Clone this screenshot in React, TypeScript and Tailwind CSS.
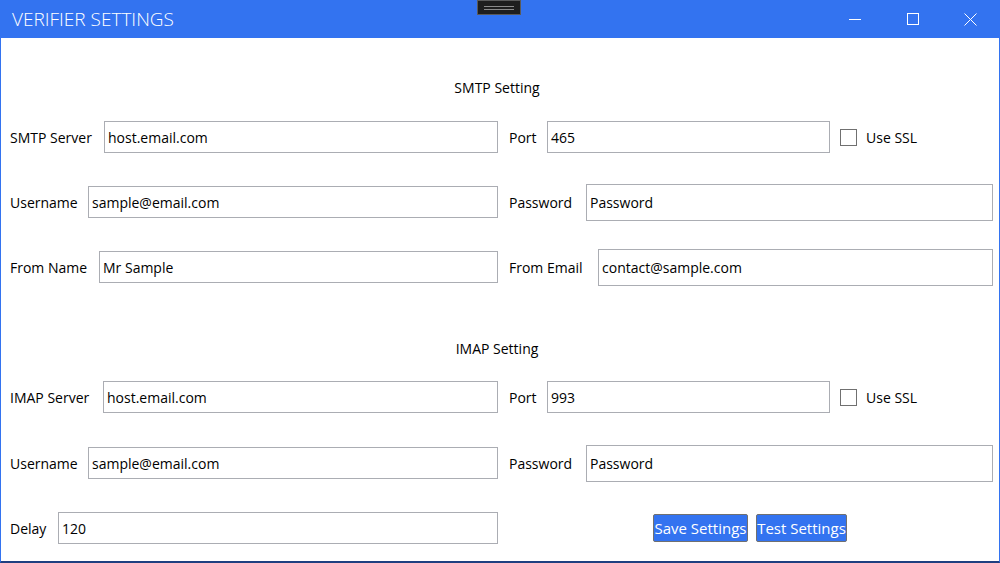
import React from "react";

const font = { fontFamily: '"Open Sans", "Noto Sans", sans-serif' };

function Field({ value, className }: { value: string; className: string }) {
  return (
    <div
      className={`flex items-center border border-[#abadb3] bg-white pl-[3px] text-[14px] text-black ${className}`}
    >
      {value}
    </div>
  );
}

function Label({ text, className }: { text: string; className: string }) {
  return <div className={`shrink-0 text-[14px] text-black ${className}`}>{text}</div>;
}

function SSL() {
  return (
    <div className="ml-[10px] flex items-center">
      <div className="h-[17px] w-[17px] border border-[#707070] bg-white" />
      <span className="ml-[9px] text-[14px] text-black">Use SSL</span>
    </div>
  );
}

export default function App() {
  return (
    <div
      className="flex h-[563px] w-[1000px] flex-col overflow-hidden bg-white"
      style={font}
    >
      {/* Title bar */}
      <div className="relative flex h-[38px] shrink-0 items-center bg-[#3373f0] pl-[12px] text-white">
        <span className="text-[19px] font-light">VERIFIER SETTINGS</span>
        <div className="absolute left-[477px] top-0 flex h-[15px] w-[44px] flex-col items-center justify-center gap-[2px] border border-[#5a5a5a] bg-[#1e1e1e]">
          <div className="h-[1px] w-[30px] bg-[#8a8a8a]" />
          <div className="h-[1px] w-[30px] bg-[#8a8a8a]" />
        </div>
        <div className="ml-auto flex h-full items-center">
          <div className="flex h-full w-[58px] items-center justify-center">
            <svg width="12" height="12" viewBox="0 0 12 12">
              <line x1="0" y1="6.5" x2="12" y2="6.5" stroke="white" strokeWidth="1" />
            </svg>
          </div>
          <div className="flex h-full w-[58px] items-center justify-center">
            <svg width="12" height="12" viewBox="0 0 12 12">
              <rect x="0.5" y="0.5" width="11" height="11" fill="none" stroke="white" strokeWidth="1" />
            </svg>
          </div>
          <div className="flex h-full w-[58px] items-center justify-center pr-[2px]">
            <svg width="13" height="13" viewBox="0 0 13 13">
              <line x1="0.5" y1="0.5" x2="12.5" y2="12.5" stroke="white" strokeWidth="1" />
              <line x1="12.5" y1="0.5" x2="0.5" y2="12.5" stroke="white" strokeWidth="1" />
            </svg>
          </div>
        </div>
      </div>

      {/* Body */}
      <div className="flex flex-1 flex-col border-x border-b-2 border-x-[#3373f0] border-b-[#1f3f80] pr-[6px]">
        <div className="mt-[30px] flex h-[38px] items-center justify-center text-[14px] text-black">
          SMTP Setting
        </div>

        <div className="mt-[12px] flex h-[38px] items-center">
          <div className="flex w-[497px] items-center pl-[9px]">
            <Label text="SMTP Server" className="w-[94px]" />
            <Field value="host.email.com" className="h-[32px] flex-1" />
          </div>
          <div className="ml-[11px] flex items-center">
            <Label text="Port" className="w-[38px]" />
            <Field value="465" className="h-[32px] w-[283px]" />
            <SSL />
          </div>
        </div>

        <div className="mt-[27px] flex h-[38px] items-center">
          <div className="flex w-[497px] items-center pl-[9px]">
            <Label text="Username" className="w-[78px]" />
            <Field value="sample@email.com" className="h-[32px] flex-1" />
          </div>
          <div className="ml-[11px] flex flex-1 items-center">
            <Label text="Password" className="w-[77px]" />
            <Field value="Password" className="h-[37px] flex-1" />
          </div>
        </div>

        <div className="mt-[27px] flex h-[38px] items-center">
          <div className="flex w-[497px] items-center pl-[9px]">
            <Label text="From Name" className="w-[89px]" />
            <Field value="Mr Sample" className="h-[32px] flex-1" />
          </div>
          <div className="ml-[11px] flex flex-1 items-center">
            <Label text="From Email" className="w-[89px]" />
            <Field value="contact@sample.com" className="h-[37px] flex-1" />
          </div>
        </div>

        <div className="mt-[43px] flex h-[38px] items-center justify-center text-[14px] text-black">
          IMAP Setting
        </div>

        <div className="mt-[11px] flex h-[38px] items-center">
          <div className="flex w-[497px] items-center pl-[9px]">
            <Label text="IMAP Server" className="w-[93px]" />
            <Field value="host.email.com" className="h-[32px] flex-1" />
          </div>
          <div className="ml-[11px] flex items-center">
            <Label text="Port" className="w-[38px]" />
            <Field value="993" className="h-[32px] w-[283px]" />
            <SSL />
          </div>
        </div>

        <div className="mt-[28px] flex h-[38px] items-center">
          <div className="flex w-[497px] items-center pl-[9px]">
            <Label text="Username" className="w-[78px]" />
            <Field value="sample@email.com" className="h-[32px] flex-1" />
          </div>
          <div className="ml-[11px] flex flex-1 items-center">
            <Label text="Password" className="w-[77px]" />
            <Field value="Password" className="h-[37px] flex-1" />
          </div>
        </div>

        <div className="mt-[27px] flex h-[38px] items-center">
          <div className="flex w-[497px] items-center pl-[9px]">
            <Label text="Delay" className="w-[48px]" />
            <Field value="120" className="h-[32px] flex-1" />
          </div>
          <div className="ml-[155px] flex items-center gap-[8px]">
            <button className="flex h-[28px] w-[95px] items-center justify-center rounded-[2px] border border-[#707070] bg-[#3373f0] text-[15px] text-white">
              Save Settings
            </button>
            <button className="flex h-[28px] w-[91px] items-center justify-center rounded-[2px] border border-[#707070] bg-[#3373f0] text-[15px] text-white">
              Test Settings
            </button>
          </div>
        </div>
      </div>
    </div>
  );
}
